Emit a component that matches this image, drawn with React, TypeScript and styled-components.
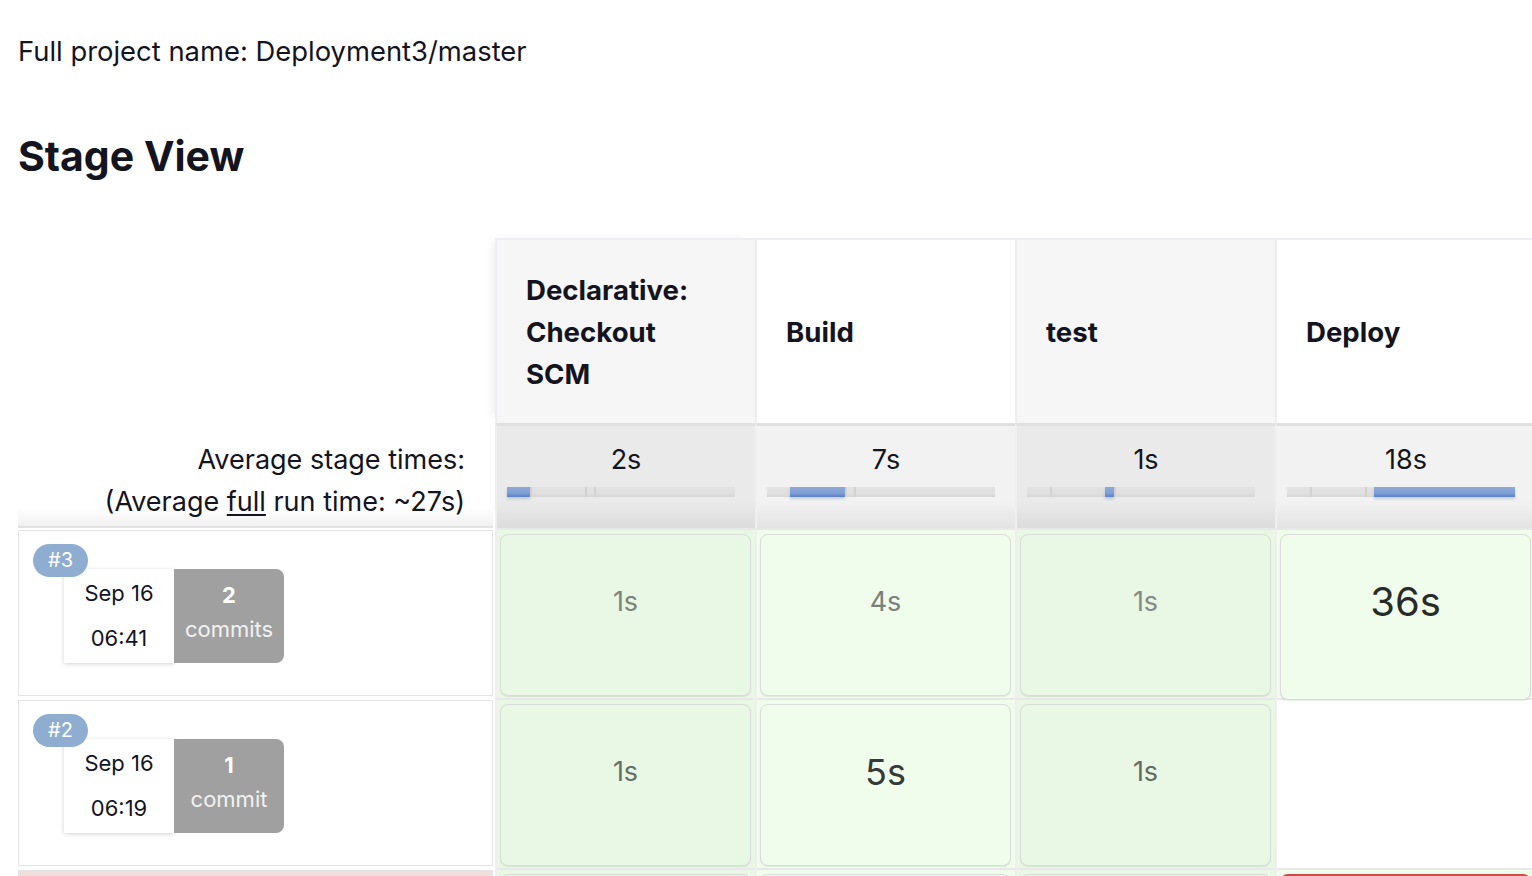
import React from "react";
import styled, { createGlobalStyle } from "styled-components";

const GlobalStyle = createGlobalStyle`
  html, body {
    margin: 0;
    padding: 0;
    background: #ffffff;
    overflow: hidden;
    font-family: Inter, "Noto Sans", "Liberation Sans", sans-serif;
    color: #14141f;
  }
  * { box-sizing: border-box; }
`;

const Page = styled.div`
  padding: 31px 0 0 18px;
`;

const ProjectName = styled.div`
  font-size: 27.4px;
  line-height: 40px;
`;

const Heading = styled.h2`
  margin: 60px 0 0;
  font-size: 41px;
  line-height: 50px;
  font-weight: 700;
`;

const Table = styled.div`
  margin-top: 57px;
  display: grid;
  grid-template-columns: 477px repeat(4, 260px);
  grid-template-rows: 185px 105px repeat(3, 170px);
  width: max-content;
`;

const Blank = styled.div`
  background: #ffffff;
`;

const StageHeader = styled.div<{ $odd: boolean; $first: boolean }>`
  border-left: 2px solid #efeff2;
  border-top: 2px solid #ededf3;
  background: ${(p) => (p.$odd ? "#f6f6f6" : "#ffffff")};
  display: flex;
  align-items: center;
  padding: 0 40px 0 29px;
  font-size: 27.6px;
  font-weight: 700;
  line-height: 42px;
  box-shadow: ${(p) => (p.$first ? "-6px -2px 8px -4px rgba(0,0,0,0.07)" : "none")};
`;

const AvgLabel = styled.div`
  margin-right: 2px;
  background: linear-gradient(to bottom, #ffffff 0%, #ffffff 82%, #f1f1f1 100%);
  border-bottom: 2px solid #e2e2e2;
  text-align: right;
  padding: 16px 28px 0 0;
  font-size: 27px;
  line-height: 42px;
`;

const FullLink = styled.span`
  text-decoration: underline;
  text-underline-offset: 3px;
`;

const AvgCell = styled.div<{ $odd: boolean }>`
  border-left: 2px solid #efefef;
  border-top: 3px solid #e0e0e0;
  background: ${(p) =>
    p.$odd
      ? "linear-gradient(to bottom, #eaeaea 0%, #eaeaea 74%, #dcdcdc 100%)"
      : "linear-gradient(to bottom, #f2f2f2 0%, #f2f2f2 74%, #e3e3e3 100%)"};
  padding-top: 16px;
  display: flex;
  flex-direction: column;
`;

const AvgTime = styled.div`
  font-size: 27px;
  line-height: 36px;
  text-align: center;
`;

const Bar = styled.div`
  display: flex;
  height: 10px;
  margin: 9px 20px 0 10px;
  background: #d8d8d8;
`;

const Seg = styled.div<{ $grow: number; $active: boolean; $first: boolean }>`
  flex: ${(p) => p.$grow} 0 0;
  height: 100%;
  background: ${(p) =>
    p.$active
      ? "linear-gradient(to bottom, #8eaad8 0%, #7f9fd6 60%, #5b80cb 100%)"
      : "linear-gradient(to bottom, #e2e2e2 0%, #e0e0e0 60%, #d6d6d6 100%)"};
  box-shadow: ${(p) =>
    p.$active
      ? "0 2px 3px rgba(60,90,160,0.25)"
      : p.$first
      ? "none"
      : "inset 2px 0 0 #d2d2d2"};
`;

const BuildInfo = styled.div<{ $failed?: boolean }>`
  position: relative;
  margin: 2px 2px 2px 0;
  border: 1px solid #e4e4e4;
  background: ${(p) => (p.$failed ? "#f2dedd" : "#ffffff")};
  padding: 38px 0 0 45px;
  display: flex;
  align-items: flex-start;
`;

const Badge = styled.span`
  position: absolute;
  z-index: 1;
  top: 13px;
  left: 14px;
  height: 33px;
  padding: 0 15px;
  border-radius: 17px;
  background: #8fadd1;
  color: #ffffff;
  font-size: 20px;
  line-height: 33px;
`;

const DateBox = styled.div`
  width: 110px;
  height: 94px;
  background: #ffffff;
  box-shadow: 0 1px 4px rgba(0, 0, 0, 0.18);
  display: flex;
  flex-direction: column;
  align-items: center;
  justify-content: center;
  font-size: 22px;
  line-height: 45px;
  color: #14141f;
`;

const CommitBox = styled.div`
  width: 110px;
  height: 94px;
  background: #a0a0a0;
  border-radius: 0 8px 8px 0;
  color: #f2f2f2;
  font-size: 22px;
  text-align: center;
  padding-top: 9px;
  line-height: 34px;
`;

const CommitCount = styled.div`
  font-weight: 700;
  color: #ffffff;
`;

const StageCell = styled.div<{ $odd: boolean; $empty?: boolean }>`
  border-left: 2px solid #efefef;
  border-top: 2px solid #e8e8e8;
  background: ${(p) => (p.$empty ? "#ffffff" : p.$odd ? "#e9f7e5" : "#f0fdec")};
  padding: 4px 4px 2px 3px;
`;

const Card = styled.div<{ $odd: boolean; $tall?: boolean; $failed?: boolean }>`
  position: relative;
  z-index: ${(p) => (p.$tall ? 1 : 0)};
  height: ${(p) => (p.$tall ? "calc(100% + 4px)" : "100%")};
  border: ${(p) => (p.$failed ? "2px solid #d24a43" : "1px solid #d9dcd9")};
  border-radius: 8px;
  background: ${(p) => (p.$failed ? "#f6dcdc" : p.$odd ? "#e9f7e5" : "#f0fdec")};
  box-shadow: 0 1px 1px rgba(0, 0, 0, 0.08);
  padding-top: 37px;
  text-align: center;
  line-height: 60px;
`;

const Duration = styled.span<{ $size: number; $color: string }>`
  font-size: ${(p) => p.$size}px;
  color: ${(p) => p.$color};
`;

type Cell = { t: string; size: number; color: string; tall?: boolean; failed?: boolean } | null;

type Build = {
  id?: string;
  date?: string;
  time?: string;
  commits?: number;
  failed?: boolean;
  cells: Cell[];
};

const stages = ["Declarative: Checkout SCM", "Build", "test", "Deploy"];
const averages = ["2s", "7s", "1s", "18s"];
const segments = [23, 55, 9, 141];

const builds: Build[] = [
  {
    id: "#3",
    date: "Sep 16",
    time: "06:41",
    commits: 2,
    cells: [
      { t: "1s", size: 27, color: "#7d847d" },
      { t: "4s", size: 27, color: "#7a807a" },
      { t: "1s", size: 27, color: "#858b85" },
      { t: "36s", size: 40, color: "#272b29", tall: true },
    ],
  },
  {
    id: "#2",
    date: "Sep 16",
    time: "06:19",
    commits: 1,
    cells: [
      { t: "1s", size: 27, color: "#667069" },
      { t: "5s", size: 36, color: "#363b38" },
      { t: "1s", size: 27, color: "#636b66" },
      null,
    ],
  },
  {
    failed: true,
    cells: [
      { t: "", size: 27, color: "#666" },
      { t: "", size: 27, color: "#666" },
      { t: "", size: 27, color: "#666" },
      { t: "", size: 27, color: "#666", failed: true },
    ],
  },
];

export default function App() {
  return (
    <>
      <GlobalStyle />
      <Page>
        <ProjectName>Full project name: Deployment3/master</ProjectName>
        <Heading>Stage View</Heading>
        <Table>
          <Blank />
          {stages.map((s, i) => (
            <StageHeader key={s} $odd={i % 2 === 0} $first={i === 0}>
              {s}
            </StageHeader>
          ))}

          <AvgLabel>
            <div>Average stage times:</div>
            <div>
              (Average <FullLink>full</FullLink> run time: ~27s)
            </div>
          </AvgLabel>
          {averages.map((a, i) => (
            <AvgCell key={i} $odd={i % 2 === 0}>
              <AvgTime>{a}</AvgTime>
              <Bar>
                {segments.map((g, j) => (
                  <Seg key={j} $grow={g} $active={j === i} $first={j === 0} />
                ))}
              </Bar>
            </AvgCell>
          ))}

          {builds.map((b, r) => (
            <React.Fragment key={r}>
              <BuildInfo $failed={b.failed}>
                {b.id && <Badge>{b.id}</Badge>}
                {b.date && (
                  <>
                    <DateBox>
                      <div>{b.date}</div>
                      <div>{b.time}</div>
                    </DateBox>
                    <CommitBox>
                      <CommitCount>{b.commits}</CommitCount>
                      <div>{b.commits === 1 ? "commit" : "commits"}</div>
                    </CommitBox>
                  </>
                )}
              </BuildInfo>
              {b.cells.map((c, i) =>
                c ? (
                  <StageCell key={i} $odd={i % 2 === 0}>
                    <Card $odd={i % 2 === 0} $tall={c.tall} $failed={c.failed}>
                      <Duration $size={c.size} $color={c.color}>
                        {c.t}
                      </Duration>
                    </Card>
                  </StageCell>
                ) : (
                  <StageCell key={i} $odd={i % 2 === 0} $empty />
                )
              )}
            </React.Fragment>
          ))}
        </Table>
      </Page>
    </>
  );
}
